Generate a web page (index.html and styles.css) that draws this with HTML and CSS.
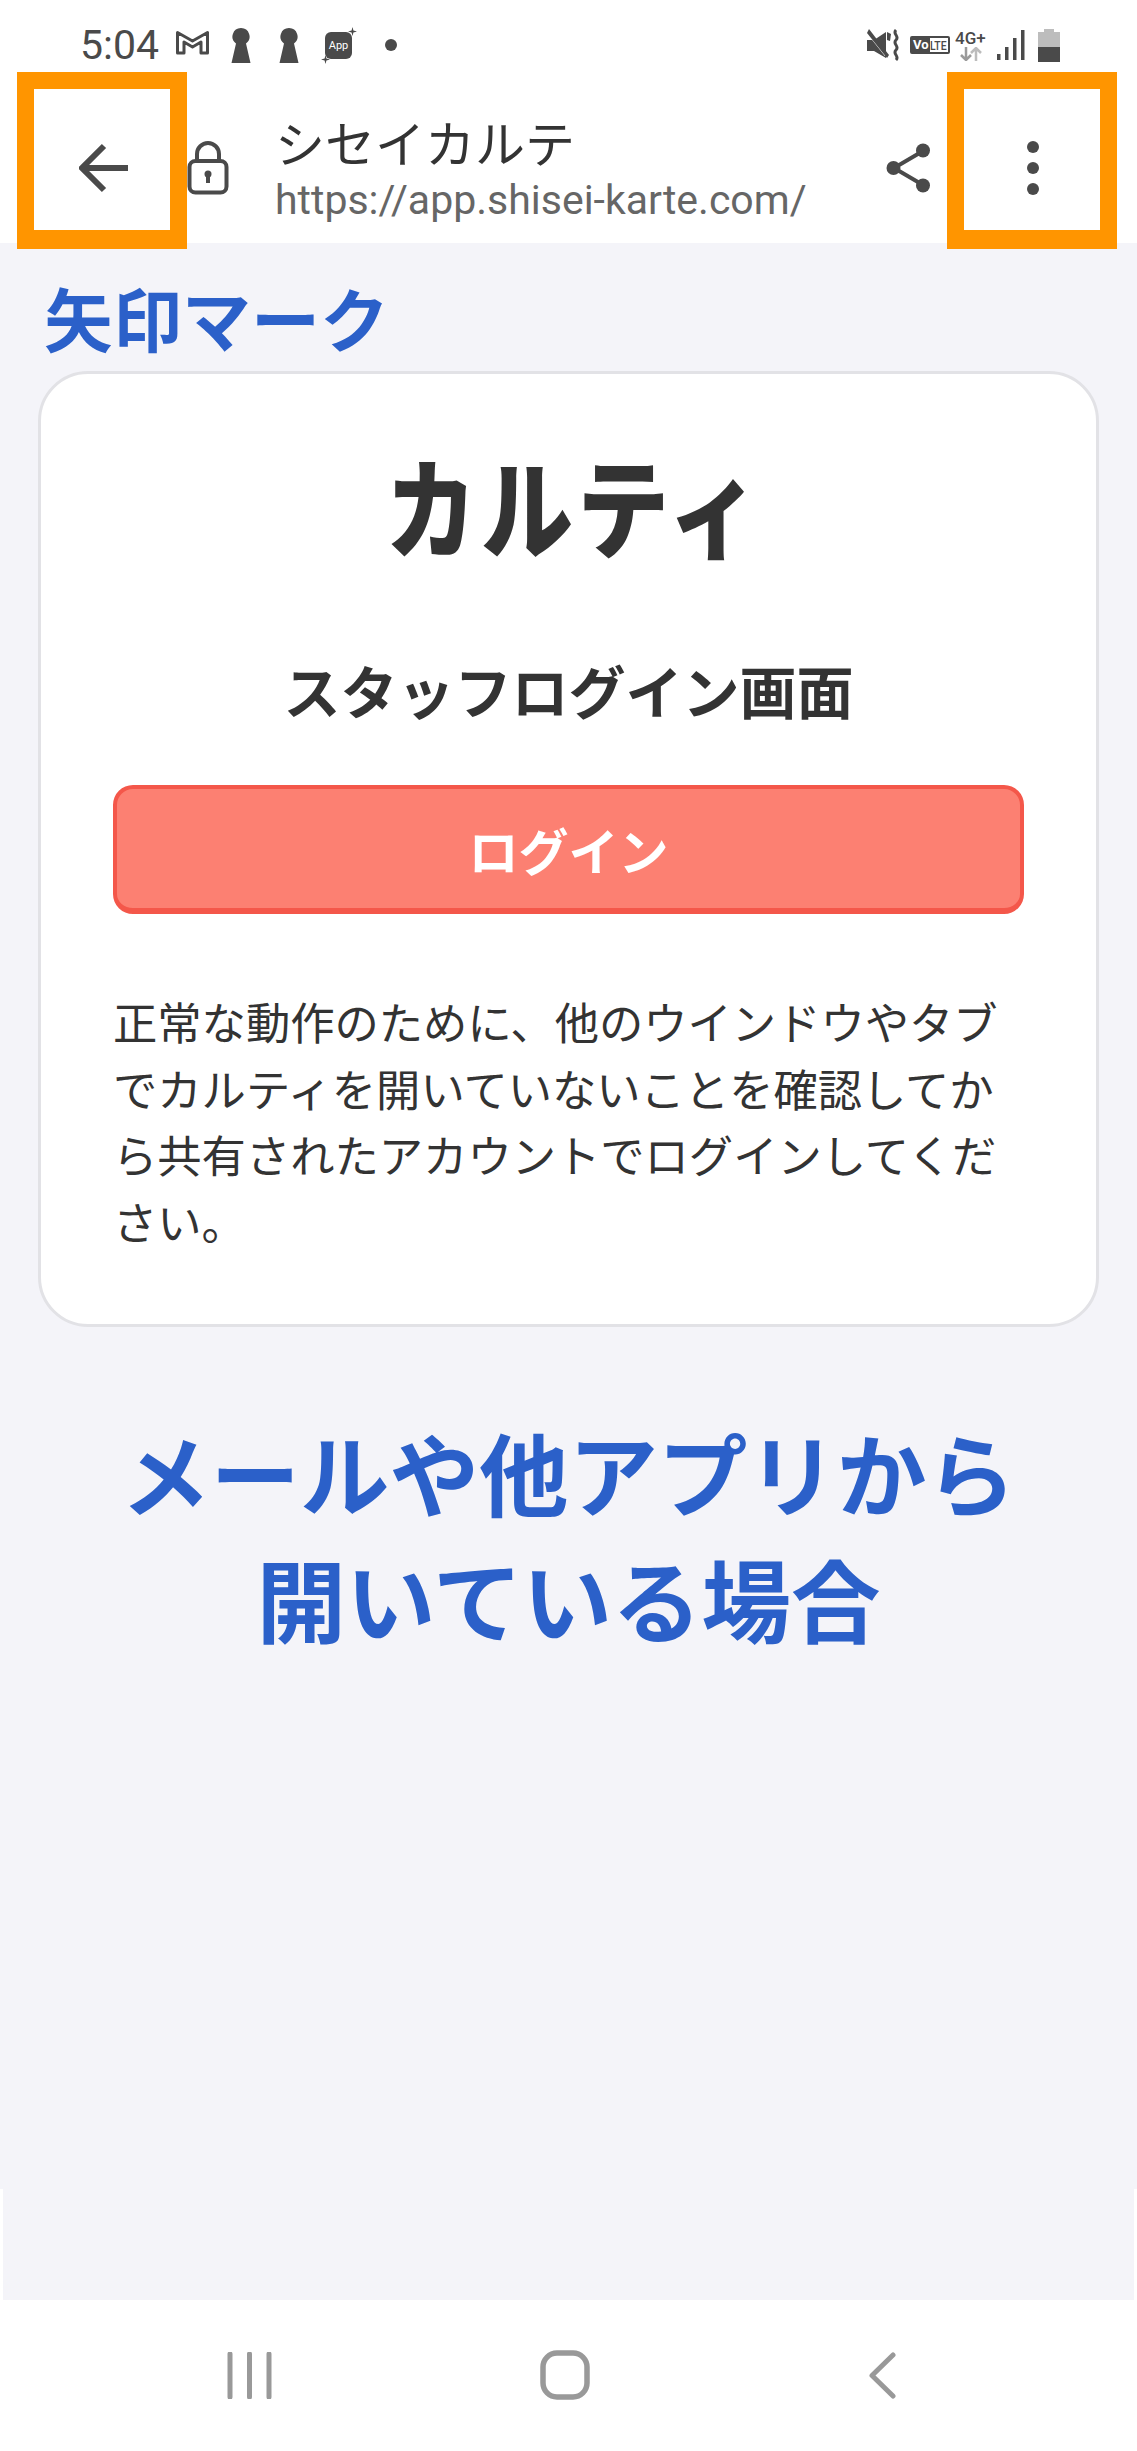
FILE: index.html
```html
<!DOCTYPE html>
<html lang="ja">
<head>
    <meta charset="UTF-8">
    <meta name="viewport" content="width=device-width, initial-scale=1.0">
    <title>シセイカルテ</title>
    <link rel="stylesheet" href="styles.css">
</head>
<body>
    <div class="page">
        <header class="top">
            <div class="status-bar">
                <span class="time">5:04</span>
                <svg class="st-mail" viewBox="0 0 35 26"><path d="M2.500 24V3.500L17.500 12 32.500 3.500V24h-6.500V13l-8.500 5-8.500-5v11z" fill="#fff" stroke="#4a4a4a" stroke-width="3" stroke-linejoin="round"/></svg>
                <svg class="st-key" viewBox="0 0 20 35"><path d="M10 0a8.500 8.500 0 0 1 5 15.400L19.500 35H.5L5 15.400A8.500 8.500 0 0 1 10 0z" fill="#4a4a4a"/></svg>
                <svg class="st-key second" viewBox="0 0 20 35"><path d="M10 0a8.500 8.500 0 0 1 5 15.400L19.500 35H.5L5 15.400A8.500 8.500 0 0 1 10 0z" fill="#4a4a4a"/></svg>
                <div class="st-app">
                    <span>App</span>
                    <svg class="spark spark-top" viewBox="0 0 10 10"><path d="M5 0l1 4 4 1-4 1-1 4-1-4-4-1 4-1z" fill="#4a4a4a"/></svg>
                    <svg class="spark spark-bottom" viewBox="0 0 10 10"><path d="M5 0l1 4 4 1-4 1-1 4-1-4-4-1 4-1z" fill="#4a4a4a"/></svg>
                </div>
                <span class="st-dot"></span>
                <div class="status-right">
                    <svg class="st-mute" viewBox="0 0 33 32"><path d="M0 11h7l12-8v26L7 22H0z" fill="#4a4a4a"/><path d="M0 2l19 24" stroke="#fff" stroke-width="3"/><path d="M2 0l20 26-2 3L0 4z" fill="#4a4a4a"/><path d="M20 3l4 2-1 7-3-1z" fill="#4a4a4a"/><path d="M29 1c-4 4 4 6 0 10s4 6 0 10 4 6 0 10" fill="none" stroke="#4a4a4a" stroke-width="3"/></svg>
                    <div class="st-volte"><b>Vo</b><span>LTE</span></div>
                    <div class="st-net">
                        <span>4G+</span>
                        <svg viewBox="0 0 22 14"><path d="M6 0v13M1 8l5 5 5-5" fill="none" stroke="#9a9a9a" stroke-width="2.500"/><path d="M16 14V1M11 6l5-5 5 5" fill="none" stroke="#bcbcbc" stroke-width="2.500"/></svg>
                    </div>
                    <svg class="st-signal" viewBox="0 0 28 30"><g fill="#4a4a4a"><rect x="0" y="24" width="3.500" height="6"/><rect x="8" y="17" width="3.500" height="13"/><rect x="16" y="8" width="3.500" height="22"/><rect x="24" y="0" width="3.500" height="30"/></g></svg>
                    <svg class="st-battery" viewBox="0 0 22 33"><path d="M6 0h10v3h6v15H0V3h6z" fill="#bdbdbd"/><path d="M0 18h22v15H0z" fill="#4a4a4a"/></svg>
                </div>
            </div>
            <div class="toolbar">
                <svg class="ic-back" viewBox="0 0 50 50"><path d="M49 25H4M25 3L3 25l22 22" fill="none" stroke="#4a4a4a" stroke-width="6"/></svg>
                <svg class="ic-lock" viewBox="0 0 42 54"><rect x="2.500" y="20" width="37" height="31.500" rx="6" fill="none" stroke="#4a4a4a" stroke-width="4"/><path d="M10 20V13a11 11 0 0 1 22 0v7" fill="none" stroke="#4a4a4a" stroke-width="4"/><circle cx="21" cy="33" r="3.500" fill="#4a4a4a"/><rect x="19" y="33" width="4" height="9" fill="#4a4a4a"/></svg>
                <div class="titles">
                    <div class="site-name">シセイカルテ</div>
                    <div class="site-url">https://app.shisei-karte.com/</div>
                </div>
                <svg class="ic-share" viewBox="0 0 45 50"><path d="M37 8L8 25l29 17" fill="none" stroke="#4a4a4a" stroke-width="4"/><circle cx="37" cy="7.500" r="7" fill="#4a4a4a"/><circle cx="7.500" cy="25" r="7" fill="#4a4a4a"/><circle cx="37" cy="42.500" r="7" fill="#4a4a4a"/></svg>
                <div class="ic-more"><i></i><i></i><i></i></div>
            </div>
        </header>

        <main class="content">
            <div class="label">矢印マーク</div>
            <section class="card">
                <h1 class="logo">カルティ</h1>
                <h2 class="card-title">スタッフログイン画面</h2>
                <button class="login-btn" type="button">ログイン</button>
                <p class="note">正常な動作のために、他のウインドウやタブでカルティを開いていないことを確認してから共有されたアカウントでログインしてください。</p>
            </section>
            <div class="caption">メールや他アプリから<br>開いている場合</div>
        </main>
        <div class="strip"></div>

        <nav class="nav">
            <svg class="nav-recent" viewBox="0 0 45 47"><path d="M3 2v43M22.500 2v43M42 2v43" stroke="#999" stroke-width="5" stroke-linecap="round"/></svg>
            <svg class="nav-home" viewBox="0 0 50 50"><rect x="3" y="3" width="44" height="44" rx="14" fill="none" stroke="#999" stroke-width="5.500"/></svg>
            <svg class="nav-back" viewBox="0 0 28 47"><path d="M25 3L4 23.500 25 44" fill="none" stroke="#999" stroke-width="5" stroke-linecap="round" stroke-linejoin="round"/></svg>
        </nav>

        <div class="mark mark-left"></div>
        <div class="mark mark-right"></div>
    </div>
</body>
</html>
```

FILE: styles.css
```css
* {
    box-sizing: border-box;
}

html,
body {
    margin: 0;
    padding: 0;
    background-color: #fff;
}

body {
    font-family: "Noto Sans CJK JP", Roboto, sans-serif;
    color: #333;
}

svg {
    display: block;
    flex: none;
}

.page {
    position: relative;
    width: 1137px;
    height: 2451px;
    overflow: hidden;
}

/* status bar */
.top {
    height: 243px;
    background-color: #fff;
}

.status-bar {
    display: flex;
    align-items: center;
    height: 72px;
    padding: 18px 0 0 80px;
    color: #4a4a4a;
}

.time {
    font-family: Roboto, sans-serif;
    font-size: 41px;
    line-height: 1;
    width: 95px;
}

.st-mail {
    width: 35px;
    height: 26px;
    margin-top: -6px;
}

.st-key {
    width: 20px;
    height: 35px;
    margin-left: 21px;
}

.st-key.second {
    margin-left: 28px;
}

.st-app {
    position: relative;
    display: flex;
    align-items: center;
    justify-content: center;
    width: 27px;
    height: 27px;
    margin-left: 26px;
    background-color: #4a4a4a;
    border-radius: 6px;
    color: #fff;
    font-family: Roboto, sans-serif;
    font-size: 11px;
}

.spark {
    position: absolute;
    width: 9px;
    height: 9px;
}

.spark-top {
    top: -5px;
    right: -5px;
}

.spark-bottom {
    bottom: -5px;
    left: -4px;
}

.st-dot {
    width: 12px;
    height: 12px;
    margin-left: 33px;
    background-color: #4a4a4a;
    border-radius: 50%;
}

.status-right {
    display: flex;
    align-items: center;
    margin-left: auto;
    padding-right: 77px;
}

.st-mute {
    width: 33px;
    height: 32px;
}

.st-volte {
    display: flex;
    align-items: center;
    width: 40px;
    height: 18px;
    margin-left: 10px;
    border: 2px solid #4a4a4a;
    border-radius: 2px;
    font-family: Roboto, sans-serif;
    font-size: 13px;
    line-height: 1;
    overflow: hidden;
}

.st-volte b {
    height: 100%;
    padding: 0 1px;
    background-color: #4a4a4a;
    color: #fff;
}

.st-volte span {
    font-size: 13px;
    font-weight: 500;
    transform: scaleX(0.8);
    transform-origin: left;
}

.st-net {
    width: 32px;
    margin-left: 5px;
}

.st-net span {
    display: block;
    font-family: Roboto, sans-serif;
    font-size: 17px;
    font-weight: 500;
    line-height: 16px;
}

.st-net svg {
    width: 22px;
    height: 14px;
    margin: 1px 0 0 5px;
}

.st-signal {
    width: 28px;
    height: 30px;
    margin-left: 10px;
}

.st-battery {
    width: 22px;
    height: 33px;
    margin-left: 13px;
}

/* toolbar */
.toolbar {
    display: flex;
    align-items: center;
    height: 168px;
    padding: 24px 0 0 79px;
}

.ic-back {
    width: 50px;
    height: 50px;
}

.ic-lock {
    width: 42px;
    height: 54px;
    margin-left: 58px;
}

.titles {
    width: 611px;
    margin-left: 46px;
    margin-top: -1px;
}

.site-name {
    font-size: 50px;
    line-height: 64px;
    color: #333;
}

.site-url {
    font-family: Roboto, sans-serif;
    font-size: 41px;
    line-height: 54px;
    color: #666;
}

.ic-share {
    width: 45px;
    height: 50px;
}

.ic-more {
    display: flex;
    flex-direction: column;
    gap: 9px;
    margin-left: 96px;
}

.ic-more i {
    display: block;
    width: 12px;
    height: 12px;
    background-color: #4a4a4a;
    border-radius: 50%;
}

/* main area */
.content {
    height: 1946px;
    padding: 28px 38px 0;
    background-color: #f4f4f9;
}

.label {
    margin: 0 0 8px 6px;
    font-size: 69px;
    font-weight: 700;
    line-height: 92px;
    color: #2b60c9;
}

.card {
    display: flex;
    flex-direction: column;
    height: 956px;
    padding: 0 72px;
    background-color: #fff;
    border: 3px solid #e2e2e6;
    border-radius: 50px;
}

.logo {
    margin: 54px 0 0 12px;
    font-size: 108px;
    font-weight: 900;
    line-height: 150px;
    letter-spacing: 5px;
    text-align: center;
    transform: scaleX(0.85);
}

.card-title {
    margin: 71px 0 0;
    font-size: 57px;
    font-weight: 700;
    line-height: 80px;
    text-align: center;
}

.login-btn {
    height: 129px;
    margin-top: 56px;
    background-color: #fc8072;
    border: 4px solid #f4574a;
    border-bottom-width: 6px;
    border-radius: 20px;
    color: #fff;
    font-family: inherit;
    font-size: 50px;
    font-weight: 700;
}

.note {
    margin: 74px 0 0;
    font-size: 44.300px;
    line-height: 66.500px;
    color: #333;
}

.caption {
    margin-top: 81px;
    font-size: 89.500px;
    font-weight: 700;
    line-height: 126px;
    text-align: center;
    color: #2b60c9;
}

.strip {
    height: 111px;
    margin: 0 3px;
    background-color: #f4f4f9;
}

/* bottom nav */
.nav {
    display: flex;
    align-items: center;
    justify-content: space-between;
    height: 151px;
    padding: 0 241px 1px 227px;
    background-color: #fff;
}

.nav-recent {
    width: 45px;
    height: 47px;
}

.nav-home {
    width: 50px;
    height: 50px;
    margin-right: 10px;
}

.nav-back {
    width: 28px;
    height: 47px;
}

/* orange highlight frames */
.mark {
    position: absolute;
    top: 72px;
    width: 170px;
    height: 177px;
    border: 17px solid #ff9500;
    border-bottom-width: 19px;
}

.mark-left {
    left: 17px;
}

.mark-right {
    left: 947px;
}
```
